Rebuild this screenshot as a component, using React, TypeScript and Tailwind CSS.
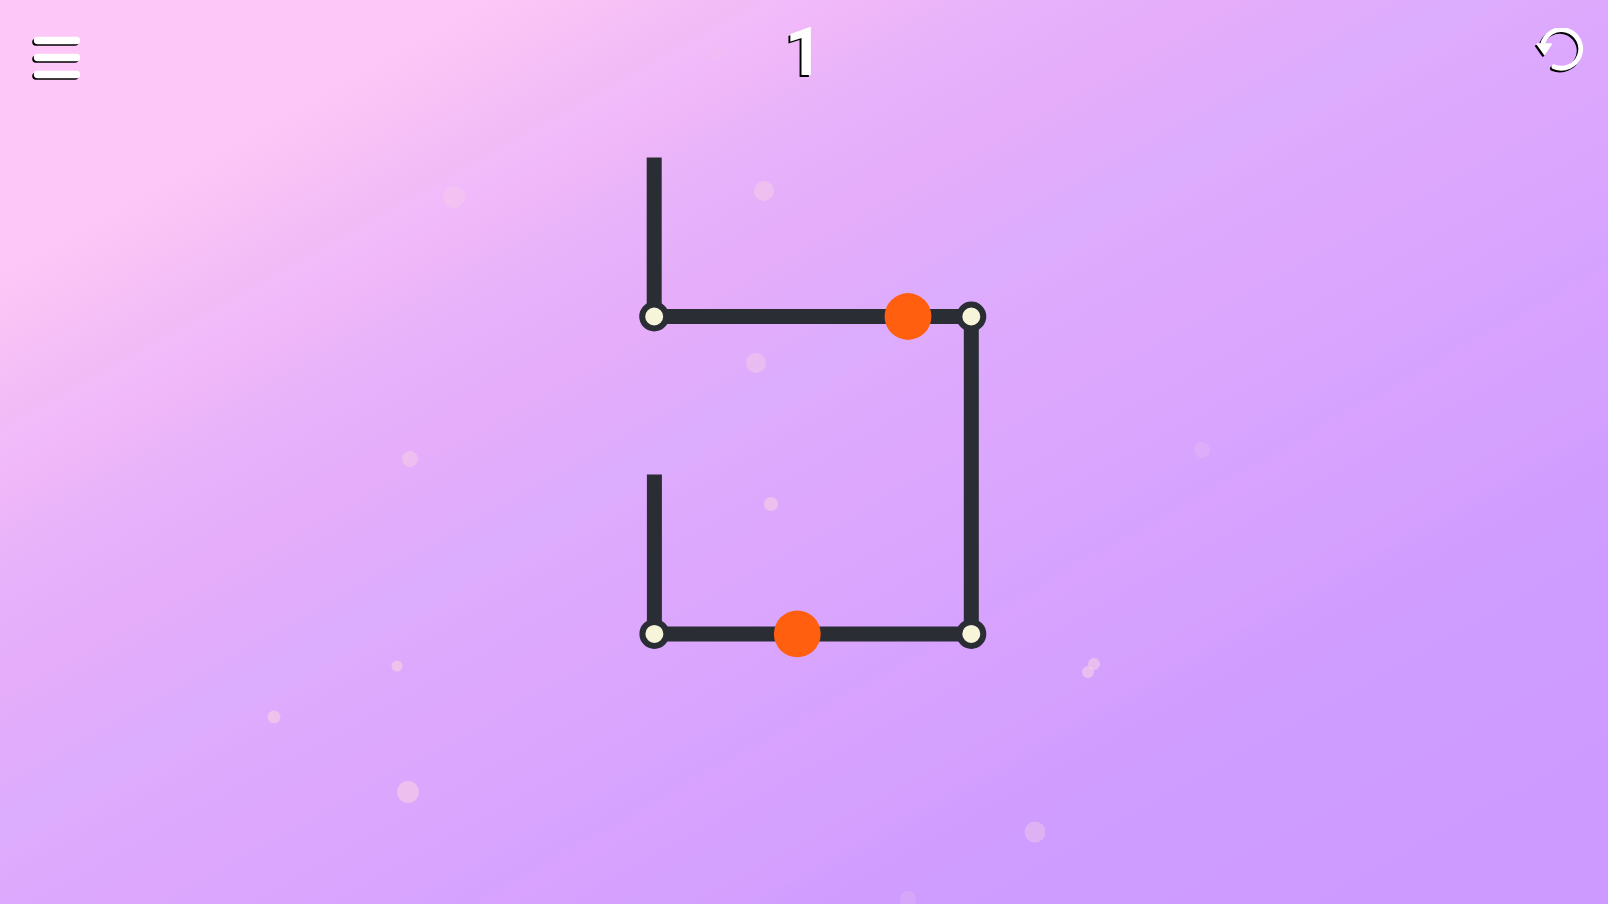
const BUBBLES = [
  { x: 454, y: 197, r: 11, alpha: 0.35 },
  { x: 764, y: 191, r: 10, alpha: 0.5 },
  { x: 716, y: 53, r: 7, alpha: 0.1 },
  { x: 756, y: 363, r: 10, alpha: 0.45 },
  { x: 410, y: 459, r: 8, alpha: 0.5 },
  { x: 771, y: 504, r: 7, alpha: 0.6 },
  { x: 397, y: 666, r: 5.5, alpha: 0.65 },
  { x: 274, y: 717, r: 6.5, alpha: 0.65 },
  { x: 408, y: 792, r: 11, alpha: 0.6 },
  { x: 1202, y: 450, r: 8, alpha: 0.2 },
  { x: 1094, y: 664, r: 6, alpha: 0.6 },
  { x: 1088, y: 672, r: 6, alpha: 0.6 },
  { x: 1035, y: 832, r: 10.5, alpha: 0.4 },
  { x: 908, y: 899, r: 8, alpha: 0.2 },
];

const NODES = [
  { x: 37.2, y: 160.5 },
  { x: 354.3, y: 160.5 },
  { x: 37.4, y: 477.9 },
  { x: 354.3, y: 477.9 },
];

const PIECES = [
  { x: 291, y: 160.5 },
  { x: 180.3, y: 477.9 },
];

function Bubbles() {
  return (
    <svg
      className="pointer-events-none absolute inset-0 h-full w-full"
      viewBox="0 0 1608 904"
      preserveAspectRatio="xMidYMid slice"
      aria-hidden="true"
    >
      {BUBBLES.map((b) => (
        <circle key={`${b.x}-${b.y}`} cx={b.x} cy={b.y} r={b.r} fill="#f6d0e4" fillOpacity={b.alpha} />
      ))}
    </svg>
  );
}

function MenuIcon() {
  const bars = "M3.5 4.5H42.5M3.5 21.5H42.5M3.5 38.5H42.5";
  return (
    <svg width="48" height="44" viewBox="-2 0 48 44" fill="none" strokeWidth="7.4" strokeLinecap="round" aria-hidden="true">
      <path d={bars} stroke="#000" transform="translate(-1.6 1.6)" />
      <path d={bars} stroke="#fff" />
    </svg>
  );
}

function RestartShape({ color }: { color: string }) {
  return (
    <g fill={color} stroke={color} strokeLinecap="round" strokeLinejoin="round">
      <path d="M7.6 17.5A19.3 19.3 0 1 1 19 39.7" fill="none" strokeWidth="4.8" />
      <path d="M2.5 17.2H16L9.5 27Z" strokeWidth="2" />
    </g>
  );
}

function RestartIcon() {
  return (
    <svg width="50" height="48" viewBox="-1 1 50 48" aria-hidden="true">
      <g transform="translate(-1.6 1.8)">
        <RestartShape color="#000" />
      </g>
      <RestartShape color="#fff" />
    </svg>
  );
}

function Board() {
  return (
    <svg width="374" height="504" viewBox="0 0 374 504" role="img" aria-label="Puzzle board">
      <g stroke="#2a2d34" strokeWidth="15" fill="none">
        <path d="M37.2 1.5V160.5H354.3V477.9H37.4V318.5" />
      </g>
      {NODES.map((n) => (
        <circle key={`${n.x}-${n.y}`} cx={n.x} cy={n.y} r="12" fill="#f7f5d9" stroke="#2a2d34" strokeWidth="6" />
      ))}
      {PIECES.map((p) => (
        <circle key={`${p.x}-${p.y}`} cx={p.x} cy={p.y} r="23.4" fill="#ff5f0f" />
      ))}
    </svg>
  );
}

export default function App() {
  return (
    <div className="relative flex min-h-screen flex-col overflow-hidden bg-[linear-gradient(to_bottom_right,#fdc8f7_0%,#fdc7f7_15%,#fac3f6_18%,#f4bff7_21%,#f1bbf6_23.4%,#f2bbfa_24%,#efb7f8_27.5%,#eab4fa_30%,#e7b1fb_33%,#e6affa_35%,#e5adfa_38.4%,#e1acfb_41%,#e0acfc_43.2%,#dcacfe_45.2%,#dcacfe_46.6%,#dfabfd_47.4%,#dda9fd_49%,#dba6fd_57%,#d8a4fe_61.4%,#d5a3fe_64.4%,#d8a2fe_65.2%,#d5a1fe_70%,#d49ffe_73.1%,#d19eff_74.2%,#ce9bff_81.4%,#cd9bff_100%)]">
      <Bubbles />
      <header className="relative grid grid-cols-3 items-start pt-7 pr-6 pl-8">
        <button type="button" aria-label="Menu" className="mt-2 cursor-pointer justify-self-start">
          <MenuIcon />
        </button>
        <h1 className="justify-self-center pr-2 font-['Roboto',sans-serif] text-[66px] leading-[50px] font-bold text-white [text-shadow:-2px_2px_0_#000]">
          1
        </h1>
        <button type="button" aria-label="Restart level" className="cursor-pointer justify-self-end">
          <RestartIcon />
        </button>
      </header>
      <main className="relative flex flex-1 justify-center pt-19">
        <Board />
      </main>
    </div>
  );
}
